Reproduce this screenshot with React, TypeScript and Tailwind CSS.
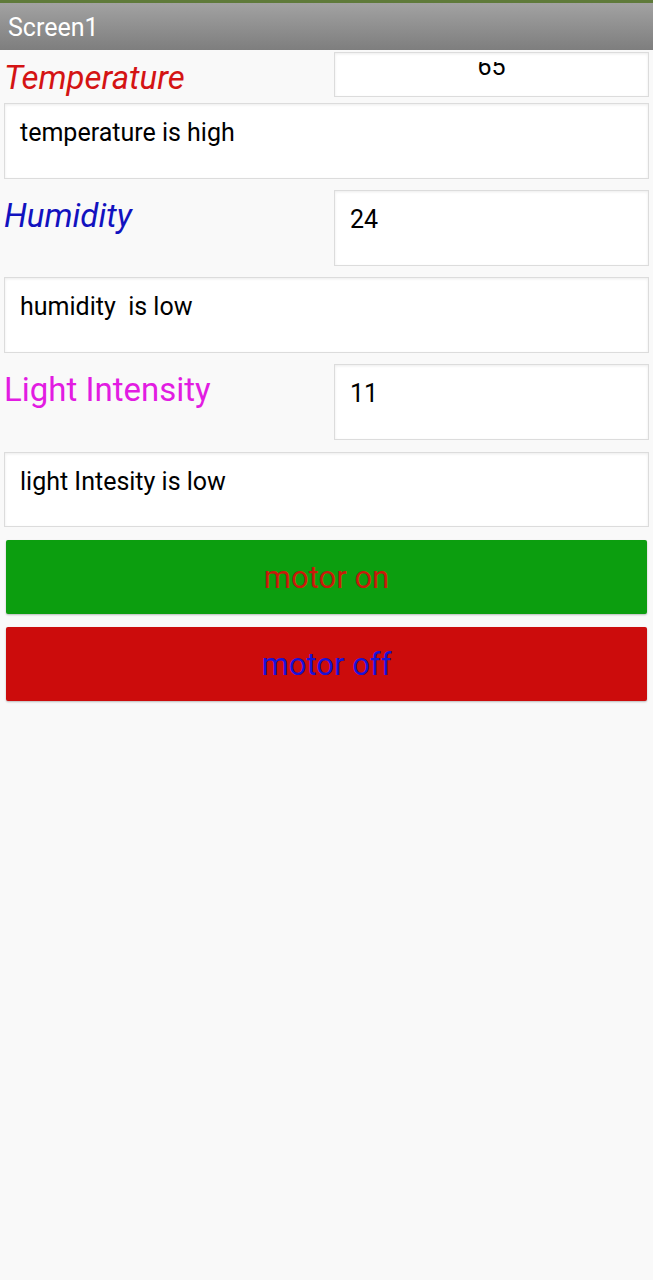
function ValueBox({
  value,
  className = "",
}: {
  value: string;
  className?: string;
}) {
  return (
    <div
      className={`overflow-hidden border border-[#dcdcdc] bg-white shadow-[inset_0_1px_3px_rgba(0,0,0,0.08)] ${className}`}
    >
      <div className="px-[15px] pt-[14px] text-[25px] leading-[30px] text-black">
        {value}
      </div>
    </div>
  );
}

// the temperature box is scrolled, only the lower half of the digits shows
function ClippedBox({ value }: { value: string }) {
  return (
    <div className="h-[45px] w-[315px] border border-[#dcdcdc] bg-white shadow-[inset_0_1px_3px_rgba(0,0,0,0.08)]">
      <div className="mt-[9px] h-[14px] overflow-hidden">
        <div className="-mt-[10px] text-center text-[25px] leading-[30px] text-black">
          {value}
        </div>
      </div>
    </div>
  );
}

function Label({ text, className }: { text: string; className: string }) {
  return (
    <div className={`w-[334px] pl-[4px] pt-[8px] text-[33px] leading-[36px] ${className}`}>
      {text}
    </div>
  );
}

export default function App() {
  return (
    <div
      className="min-h-[1280px] bg-[#f9f9f9]"
      style={{ fontFamily: "Roboto, 'Liberation Sans', sans-serif" }}
    >
      <div className="h-[3px] bg-[#5f7a3a]" />
      <div className="flex h-[47px] items-center bg-gradient-to-b from-[#a2a2a2] to-[#7e7e7e] pl-[8px] pt-[3px] text-[25px] text-white">
        Screen1
      </div>

      <div className="flex flex-col pt-[2px]">
        <div className="flex items-start">
          <Label text="Temperature" className="italic text-[#d41414]" />
          <ClippedBox value="65" />
        </div>
        <ValueBox value="temperature is high" className="mx-[4px] mt-[6px] h-[76px]" />

        <div className="mt-[11px] flex items-start">
          <Label text="Humidity" className="italic text-[#1212bf]" />
          <ValueBox value="24" className="h-[76px] w-[315px]" />
        </div>
        <ValueBox value="humidity  is low" className="mx-[4px] mt-[11px] h-[76px] whitespace-pre" />

        <div className="mt-[11px] flex items-start">
          <Label text="Light Intensity" className="text-[#e21ce2]" />
          <ValueBox value="11" className="h-[76px] w-[315px]" />
        </div>
        <ValueBox value="light Intesity is low" className="mx-[4px] mt-[12px] h-[75px]" />

        <div className="mt-[13px] flex flex-col gap-[13px] px-[6px]">
          <button className="h-[74px] rounded-[2px] bg-[#0c9e0f] pt-[2px] text-[31px] text-[#c81a0a] shadow-[0_1px_2px_rgba(0,0,0,0.25)]">
            motor on
          </button>
          <button className="h-[74px] rounded-[2px] bg-[#cc0c0c] pt-[2px] text-[31px] text-[#1a12d6] shadow-[0_1px_2px_rgba(0,0,0,0.25)]">
            motor off
          </button>
        </div>
      </div>
    </div>
  );
}
